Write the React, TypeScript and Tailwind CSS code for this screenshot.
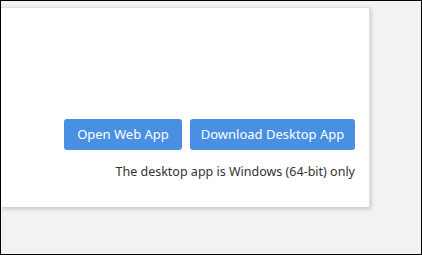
export default function App() {
  return (
    <div
      className="w-[422px] h-[255px] border border-black bg-[#f2f2f2] pt-[6px]"
      style={{ fontFamily: '"Noto Sans", "Open Sans", sans-serif' }}
    >
      <div className="w-[369px] h-[200px] bg-white border-t border-r border-[#e0e0e0] shadow-[1px_2px_4px_rgba(0,0,0,0.18)] flex flex-col items-end justify-end pr-[14px] pb-[26px]">
        <div className="flex gap-2">
          <button className="h-[31px] w-[118px] rounded-[3px] bg-[#4a90e2] text-white text-[13px]">
            Open Web App
          </button>
          <button className="h-[31px] w-[165px] rounded-[3px] bg-[#4a90e2] text-white text-[13px]">
            Download Desktop App
          </button>
        </div>
        <p className="mt-[13px] text-[12.5px] leading-[18px] text-[#333]">
          The desktop app is Windows (64-bit) only
        </p>
      </div>
    </div>
  );
}
